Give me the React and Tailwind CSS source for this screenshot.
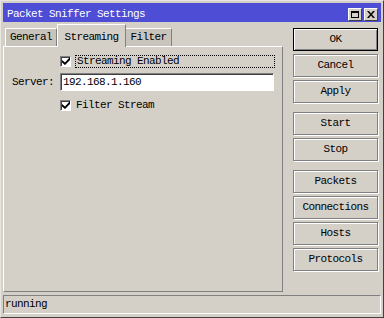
const mono = { fontFamily: '"Liberation Mono", "DejaVu Sans Mono", monospace' };

function Btn({ label, primary }) {
  return (
    <button
      className={
        "h-[23px] w-[85px] flex items-center justify-center text-[11px] tracking-[-0.6px] text-black bg-[#d4d0c8] " +
        (primary
          ? "border border-black shadow-[inset_1px_1px_0_#ffffff,inset_-1px_-1px_0_#808080]"
          : "border border-[#808080] shadow-[inset_1px_1px_0_#ffffff,1px_1px_0_#ffffff]")
      }
    >
      {label}
    </button>
  );
}

function Check({ label, focused }) {
  return (
    <div className="flex items-center h-[14px]">
      <div className="w-[11px] h-[11px] bg-white border border-t-[#808080] border-l-[#808080] border-b-white border-r-white shadow-[inset_1px_1px_0_#404040] flex items-center justify-center">
        <svg width="8" height="8" viewBox="0 0 8 8">
          <path d="M0 3 L3 5.5 L8 0 L8 3 L3 8 L0 5.5 Z" fill="#000" />
        </svg>
      </div>
      <div
        className={
          "ml-[4px] h-[13px] flex items-center pl-[1px] " +
          (focused ? "w-[200px] border border-dotted border-black" : "")
        }
      >
        <span className="text-[11px] tracking-[-0.6px] leading-none">{label}</span>
      </div>
    </div>
  );
}

export default function App() {
  return (
    <div
      className="w-[384px] h-[318px] bg-[#d4d0c8] border-l border-t border-[#e8e6e0] border-r-[#404040] border-b-[#404040] border-r border-b text-black px-[2px] pt-[2px] overflow-hidden"
      style={mono}
    >
      {/* Заголовок */}
      <div className="h-[19px] bg-[#4d4dd6] flex items-center pl-[4px] pr-[3px]">
        <span className="text-white text-[11px] tracking-[-0.6px] leading-none pt-[4px]">Packet Sniffer Settings</span>
        <div className="ml-auto flex gap-[2px] pt-[3px]">
          <div className="w-[14px] h-[13px] bg-[#d4d0c8] border border-t-white border-l-white border-b-[#404040] border-r-[#404040] flex items-center justify-center">
            <div className="w-[8px] h-[7px] border border-black border-t-2" />
          </div>
          <div className="w-[14px] h-[13px] bg-[#d4d0c8] border border-t-white border-l-white border-b-[#404040] border-r-[#404040] flex items-center justify-center">
            <svg width="8" height="7" viewBox="0 0 8 7">
              <path d="M0 0 L2 0 L4 2.5 L6 0 L8 0 L5 3.5 L8 7 L6 7 L4 4.5 L2 7 L0 7 L3 3.5 Z" fill="#000" />
            </svg>
          </div>
        </div>
      </div>

      <div className="flex mt-[2px] h-[268px]">
        {/* Ліва частина з вкладками */}
        <div className="w-[280px] flex flex-col">
          <div className="flex items-end h-[22px] pl-[2px]">
            <div className="h-[18px] w-[52px] bg-[#c8c4bc] border-l border-t border-white border-r border-r-[#808080] flex items-center justify-center text-[11px] tracking-[-0.6px]">
              General
            </div>
            <div className="h-[23px] w-[69px] -mb-[1px] bg-[#d4d0c8] border-l border-t border-white border-r border-r-[#808080] flex items-start pt-[4px] justify-center text-[11px] tracking-[-0.6px] relative z-10">
              Streaming
            </div>
            <div className="h-[18px] w-[46px] bg-[#c8c4bc] border-t border-white border-r border-r-[#808080] flex items-center justify-center text-[11px] tracking-[-0.6px]">
              Filter
            </div>
          </div>
          <div className="flex-1 border border-t-white border-l-white border-r-[#808080] border-b-[#808080] pl-[56px] pt-[7px]">
            <Check label="Streaming Enabled" focused />
            <div className="flex items-center mt-[5px] -ml-[48px]">
              <span className="text-[11px] tracking-[-0.6px] w-[48px]">Server:</span>
              <div className="w-[214px] h-[18px] bg-white border border-t-[#808080] border-l-[#808080] border-b-white border-r-white shadow-[inset_1px_1px_0_#404040] flex items-center pl-[2px] text-[11px] tracking-[-0.6px]">
                192.168.1.160
              </div>
            </div>
            <div className="mt-[7px]">
              <Check label="Filter Stream" />
            </div>
          </div>
        </div>

        {/* Кнопки справа */}
        <div className="ml-[10px] pt-[4px] flex flex-col">
          <div className="flex flex-col gap-[3px]">
            <Btn label="OK" primary />
            <Btn label="Cancel" />
            <Btn label="Apply" />
          </div>
          <div className="flex flex-col gap-[3px] mt-[9px]">
            <Btn label="Start" />
            <Btn label="Stop" />
          </div>
          <div className="flex flex-col gap-[3px] mt-[9px]">
            <Btn label="Packets" />
            <Btn label="Connections" />
            <Btn label="Hosts" />
            <Btn label="Protocols" />
          </div>
        </div>
      </div>

      {/* Статус */}
      <div className="mt-[3px] h-[19px] w-[378px] border border-t-[#808080] border-l-[#808080] border-b-white border-r-white flex items-center pl-[1px] text-[11px] tracking-[-0.6px]">
        running
      </div>
    </div>
  );
}
